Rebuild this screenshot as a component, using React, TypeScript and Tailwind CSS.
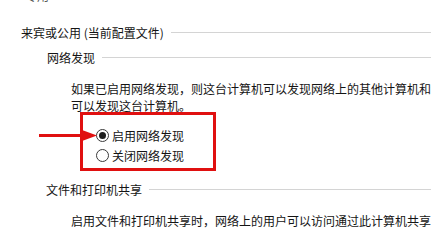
import React from 'react';

function Heading({ text, indent }: { text: string; indent: string }) {
  return (
    <div className={`flex items-center h-[17px] ${indent}`}>
      <span className="whitespace-nowrap">{text}</span>
      <div className="flex-1 h-px bg-[#d4d4d4] ml-[7px]" />
    </div>
  );
}

function Radio({ checked, label }: { checked?: boolean; label: string }) {
  return (
    <div className="flex items-center h-[20px]">
      <span className="w-[13px] h-[13px] rounded-full border border-[#3a3a3a] bg-white flex items-center justify-center">
        {checked && <span className="w-[7px] h-[7px] rounded-full bg-[#1e1e1e]" />}
      </span>
      <span className="ml-[3px] whitespace-nowrap">{label}</span>
    </div>
  );
}

export default function App() {
  return (
    <div className="relative w-[431px] h-[230px] overflow-hidden bg-white text-[12px] leading-[17px] text-[#141414] font-['Noto_Sans_CJK_SC','Microsoft_YaHei',sans-serif]">
      <div className="pl-[25px] -mt-[13px] h-[17px] whitespace-nowrap text-[#555]">专用</div>

      <div className="mt-[20px]">
        <Heading text="来宾或公用 (当前配置文件)" indent="pl-[21px]" />
      </div>

      <div className="mt-[8px]">
        <Heading text="网络发现" indent="pl-[47px]" />
      </div>

      <div className="mt-[14px] pl-[71px] whitespace-nowrap">
        <p>如果已启用网络发现，则这台计算机可以发现网络上的其他计算机和设备，而且其他网络计算机亦</p>
        <p>可以发现这台计算机。</p>
      </div>

      {/* highlighted radio group */}
      <div className="ml-[80px] -mt-[2px] w-[136px] h-[59px] border-[3px] border-[#e01010] pt-[10px] pl-[13px]">
        <Radio checked label="启用网络发现" />
        <Radio label="关闭网络发现" />
      </div>

      <div className="mt-[10px]">
        <Heading text="文件和打印机共享" indent="pl-[46px]" />
      </div>

      <div className="mt-[14px] pl-[71px] whitespace-nowrap">
        <p>启用文件和打印机共享时，网络上的用户可以访问通过此计算机共享的文件和打印机。</p>
      </div>

      {/* red pointer arrow */}
      <svg className="absolute left-[39px] top-[130px]" width="58" height="11" viewBox="0 0 58 11">
        <line x1="0" y1="5.5" x2="45" y2="5.5" stroke="#e01010" strokeWidth="3" />
        <polygon points="43,0 58,5.5 43,11" fill="#e01010" />
      </svg>
    </div>
  );
}
